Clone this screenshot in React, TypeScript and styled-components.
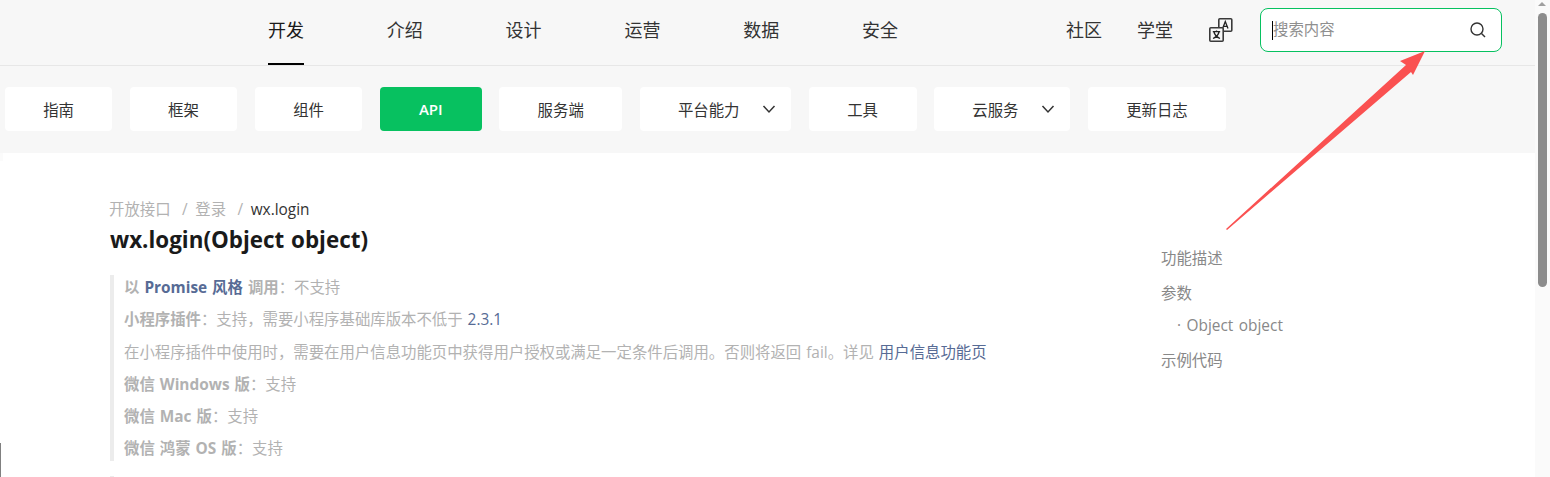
import React from "react";
import styled, { createGlobalStyle } from "styled-components";

const FONT = `"Open Sans", "Noto Sans CJK SC", sans-serif`;

const Global = createGlobalStyle`
  html, body { margin: 0; padding: 0; height: 477px; overflow: hidden; background: #fff; }
  body { font-family: ${FONT}; }
  * { box-sizing: border-box; }
`;

const Viewport = styled.div`
  position: relative;
  width: 1550px;
  height: 477px;
  overflow: hidden;
  display: flex;
`;
const Page = styled.div`
  width: 1535px;
  flex: none;
  display: flex;
  flex-direction: column;
  height: 477px;
`;
const TopBar = styled.header`
  height: 66px;
  flex: none;
  background: #f7f7f7;
  border-bottom: 1px solid #e7e7e7;
  display: flex;
  padding: 0 33px 0 268px;
  justify-content: space-between;
`;
const MainNav = styled.nav`
  display: flex;
  gap: 82.8px;
`;
const NavItem = styled.a<{ $active?: boolean }>`
  display: block;
  height: 65px;
  line-height: 60px;
  font-size: 18px;
  color: ${(p) => (p.$active ? "#1a1a1a" : "#333")};
  border-bottom: 2px solid ${(p) => (p.$active ? "#000" : "transparent")};
`;
const RightNav = styled.div`
  display: flex;
  align-items: flex-start;
`;
const SideLink = styled.a`
  font-size: 18px;
  line-height: 60px;
  color: #333;
  margin-right: 35px;
`;
const LangIcon = styled.svg`
  width: 24px;
  height: 24px;
  margin: 18px 27px 0 1px;
  flex: none;
`;
const SearchBox = styled.div`
  width: 242px;
  height: 44px;
  margin-top: 8px;
  background: #fff;
  border: 1px solid #07c160;
  border-radius: 8px;
  display: flex;
  align-items: center;
  padding: 0 14px 0 11px;
`;
const Caret = styled.span`
  width: 1px;
  height: 19px;
  background: #000;
  flex: none;
`;
const Placeholder = styled.span`
  flex: 1;
  font-size: 15.4px;
  line-height: 20px;
  padding-bottom: 1px;
  color: #8f8f8f;
`;
const SearchIcon = styled.svg`
  width: 18px;
  height: 18px;
`;
const SubBar = styled.div`
  height: 87px;
  flex: none;
  background: #f7f7f7;
  display: flex;
  gap: 17.7px;
  padding: 21px 0 0 5px;
`;
const Tab = styled.a<{ $active?: boolean; $w: number; $drop?: boolean }>`
  width: ${(p) => p.$w}px;
  height: 44px;
  flex: none;
  display: flex;
  align-items: center;
  justify-content: ${(p) => (p.$drop ? "flex-start" : "center")};
  padding-left: ${(p) => (p.$drop ? 38 : 0)}px;
  gap: 22.5px;
  font-size: ${(p) => (p.$active ? 15 : 15.4)}px;
  border-radius: 4px;
  background: ${(p) => (p.$active ? "#07c160" : "#fff")};
  color: ${(p) => (p.$active ? "#fff" : "#333")};
  font-weight: ${(p) => (p.$active ? 600 : 400)};
`;
const Body = styled.main`
  flex: 1;
  display: flex;
  background: #fff;
  padding: 46px 0 0 109px;
`;
const Article = styled.article`
  width: 1052px;
  flex: none;
`;
const Crumbs = styled.div`
  font-size: 15.4px;
  line-height: 21px;
  color: #b2b2b2;
  display: flex;
`;
const CrumbSep = styled.span`
  margin: 0 7.5px 0 11.5px;
`;
const CrumbNow = styled.span`
  color: #333;
`;
const Title = styled.h1`
  margin: 4px 0 0 1px;
  font-size: 22.4px;
  line-height: 32px;
  font-weight: 700;
  word-spacing: 1px;
  color: #1a1a1a;
`;
const Quote = styled.blockquote`
  margin: 19px 0 0 1px;
  padding: 1px 0 0 10px;
  height: 186px;
  border-left: 4px solid #ececec;
  color: #b2b2b2;
  font-size: 15.4px;
`;
const QuoteNext = styled(Quote)`
  margin-top: 15px;
`;
const Line = styled.p`
  margin: 0;
  height: 32.3px;
  line-height: 24px;
  word-spacing: 1px;
  white-space: nowrap;
`;
const Bold = styled.strong`
  font-weight: 700;
`;
const Link = styled.a`
  color: #576b95;
`;
const Toc = styled.aside`
  padding-top: 50px;
  font-size: 15.4px;
  color: #888;
`;
const TocItem = styled.div<{ $sub?: boolean }>`
  line-height: 20px;
  margin-bottom: 15px;
  margin-left: ${(p) => (p.$sub ? 16 : 0)}px;
  margin-top: ${(p) => (p.$sub ? -3 : 0)}px;
  word-spacing: 1.5px;
  white-space: nowrap;
`;
const ScrollTrack = styled.div`
  width: 15px;
  flex: none;
  height: 477px;
  background: #fafafa;
  padding: 13px 3px 0;
`;
const ScrollThumb = styled.div`
  height: 274px;
  border-radius: 5px;
  background: #8c8c8c;
`;
const ScrollUp = styled.span`
  position: absolute;
  right: 4px;
  top: 2px;
  width: 0;
  height: 0;
  border-left: 4px solid transparent;
  border-right: 4px solid transparent;
  border-bottom: 4px solid #a0a0a0;
`;
const Arrow = styled.svg`
  position: absolute;
  left: 0;
  top: 0;
  width: 1550px;
  height: 477px;
  pointer-events: none;
`;
const EdgeMark = styled.span`
  position: absolute;
  left: 0;
  bottom: 0;
  width: 1px;
  height: 34px;
  background: #808080;
`;
const EdgeNick = styled.span`
  position: absolute;
  left: 0;
  top: 153px;
  width: 3px;
  height: 8px;
  background: #fbfbfb;
`;

const Chevron = () => (
  <svg width="14" height="14" viewBox="0 0 14 14" fill="none" stroke="#333" strokeWidth="1.5">
    <path d="M1.5 4l5.500 6 5.500-6" />
  </svg>
);

export default function App() {
  return (
    <Viewport>
      <Global />
      <Page>
        <TopBar>
          <MainNav>
            <NavItem $active>开发</NavItem>
            <NavItem>介绍</NavItem>
            <NavItem>设计</NavItem>
            <NavItem>运营</NavItem>
            <NavItem>数据</NavItem>
            <NavItem>安全</NavItem>
          </MainNav>
          <RightNav>
            <SideLink>社区</SideLink>
            <SideLink>学堂</SideLink>
            <LangIcon viewBox="0 0 24 24" fill="none">
              <rect x="9.8" y="0.8" width="13" height="12.4" rx="1" fill="#f7f7f7" stroke="#3a3a3a" strokeWidth="1.6" />
              <path d="M13.600 10.500l2.700-7 2.700 7M14.600 8.300h3.400" stroke="#222" strokeWidth="1.3" />
              <rect x="0.8" y="9.800" width="13.400" height="13.400" rx="1" fill="#f7f7f7" stroke="#3a3a3a" strokeWidth="1.6" />
              <path d="M3.800 13.600h7.400M7.500 12.400v1.400M5 14c.6 3 2.600 5 6 6.500M10 14c-.6 3-2.600 5-6 6.500" stroke="#222" strokeWidth="1.3" />
            </LangIcon>
            <SearchBox>
              <Caret />
              <Placeholder>搜索内容</Placeholder>
              <SearchIcon viewBox="0 0 18 18" fill="none" stroke="#333" strokeWidth="1.4">
                <circle cx="8" cy="8" r="6" />
                <path d="M12.500 12.500l3.500 3.500" />
              </SearchIcon>
            </SearchBox>
          </RightNav>
        </TopBar>
        <SubBar>
          <Tab $w={107.2}>指南</Tab>
          <Tab $w={107.2}>框架</Tab>
          <Tab $w={107.7}>组件</Tab>
          <Tab $w={101.4} $active>API</Tab>
          <Tab $w={123}>服务端</Tab>
          <Tab $w={151} $drop>平台能力<Chevron /></Tab>
          <Tab $w={108}>工具</Tab>
          <Tab $w={136} $drop>云服务<Chevron /></Tab>
          <Tab $w={138}>更新日志</Tab>
        </SubBar>
        <Body>
          <Article>
            <Crumbs>
              <span>开放接口</span>
              <CrumbSep>/</CrumbSep>
              <span>登录</span>
              <CrumbSep>/</CrumbSep>
              <CrumbNow>wx.login</CrumbNow>
            </Crumbs>
            <Title>wx.login(Object object)</Title>
            <Quote>
              <Line><Bold>以 <Link>Promise 风格</Link> 调用</Bold>：不支持</Line>
              <Line><Bold>小程序插件</Bold>：支持，需要小程序基础库版本不低于 <Link>2.3.1</Link></Line>
              <Line>在小程序插件中使用时，需要在用户信息功能页中获得用户授权或满足一定条件后调用。否则将返回 fail。详见 <Link>用户信息功能页</Link></Line>
              <Line><Bold>微信 Windows 版</Bold>：支持</Line>
              <Line><Bold>微信 Mac 版</Bold>：支持</Line>
              <Line><Bold>微信 鸿蒙 OS 版</Bold>：支持</Line>
            </Quote>
            <QuoteNext />
          </Article>
          <Toc>
            <TocItem>功能描述</TocItem>
            <TocItem>参数</TocItem>
            <TocItem $sub>· Object object</TocItem>
            <TocItem>示例代码</TocItem>
          </Toc>
        </Body>
      </Page>
      <ScrollTrack>
        <ScrollThumb />
      </ScrollTrack>
      <ScrollUp />
      <EdgeMark />
      <EdgeNick />
      <Arrow viewBox="0 0 1550 477">
        <polygon points="1226,229 1406,65 1400,61 1425,51 1413,75 1411,72 1227,230" fill="#fa5151" />
      </Arrow>
    </Viewport>
  );
}
